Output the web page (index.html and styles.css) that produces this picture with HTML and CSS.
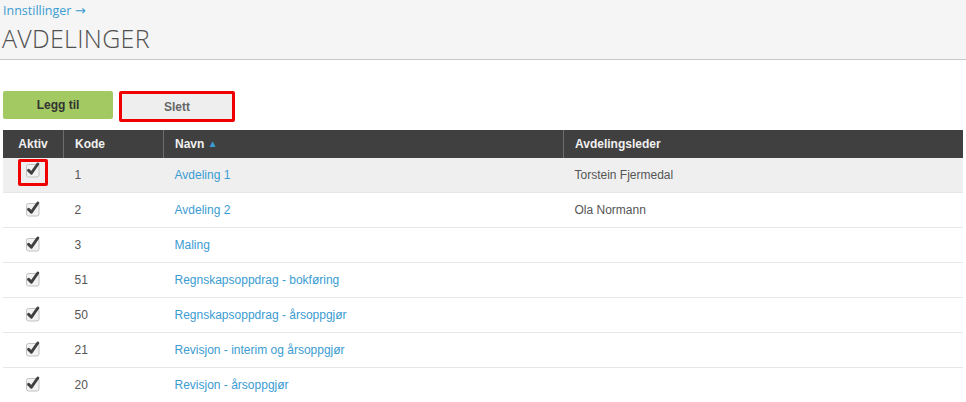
FILE: index.html
```html
<!DOCTYPE html>
<html lang='no'>
<head>
  <title>Avdelinger</title>
  <link rel="stylesheet" href="styles.css">
</head>
<body>
  <div class='pageHeader'>
    <a href='#' class='crumb'>Innstillinger <span class='crumbArrow'>&rarr;</span></a>
    <h1>AVDELINGER</h1>
  </div>

  <div class='content'>
    <div class='toolbar'>
      <button class='btnAdd'>Legg til</button>
      <div class='marked'>
        <button class='btnDelete'>Slett</button>
      </div>
    </div>

    <table class='grid'>
      <thead>
        <tr>
          <th class='colActive'>Aktiv</th>
          <th class='colCode'>Kode</th>
          <th class='colName'>Navn <span class='sortArrow'>&#9650;</span></th>
          <th>Avdelingsleder</th>
        </tr>
      </thead>
      <tbody id='rows'></tbody>
    </table>
  </div>

  <script>
    const departments = [
      { code: '1', name: 'Avdeling 1', leader: 'Torstein Fjermedal' },
      { code: '2', name: 'Avdeling 2', leader: 'Ola Normann' },
      { code: '3', name: 'Maling', leader: '' },
      { code: '51', name: 'Regnskapsoppdrag - bokføring', leader: '' },
      { code: '50', name: 'Regnskapsoppdrag - årsoppgjør', leader: '' },
      { code: '21', name: 'Revisjon - interim og årsoppgjør', leader: '' },
      { code: '20', name: 'Revisjon - årsoppgjør', leader: '' }
    ];

    const check = `<svg class='check' width='16' height='16' viewBox='0 0 16 16'>
      <rect x='1.5' y='2.5' width='12.5' height='12.5' rx='2' fill='#f2f2f2' stroke='#c2c2c2'/>
      <path d='M3.6 8.4 L6.4 11.2 L12.8 2' fill='none' stroke='#404040' stroke-width='2.9' stroke-linecap='round' stroke-linejoin='round'/>
    </svg>`;

    let tbody = document.querySelector('#rows');
    departments.forEach((dep, i) => {
      const tr = document.createElement('tr');
      if (i === 0) tr.className = 'selected';
      const box = i === 0 ? `<span class='marked markedBox'>${check}</span>` : check;
      tr.innerHTML = `
        <td class='colActive'>${box}</td>
        <td class='colCode'>${dep.code}</td>
        <td class='colName'><a href='#'>${dep.name}</a></td>
        <td>${dep.leader}</td>`;
      tbody.appendChild(tr);
    });
  </script>
</body>
</html>
```

FILE: styles.css
```css
body {
  margin: 0;
  background-color: white;
  font-family: 'Liberation Sans', Arial, sans-serif;
  font-size: 12px;
  color: #555;
}

a {
  color: #3a9cd2;
  text-decoration: none;
}

.pageHeader {
  background-color: #f5f5f5;
  border-bottom: 1px solid #c9c9c9;
  height: 59px;
  padding: 0 3px;
}

.crumb {
  display: block;
  padding-top: 2px;
  font-family: 'Open Sans', 'Liberation Sans', sans-serif;
  font-size: 12.5px;
  line-height: 17px;
}

.crumbArrow {
  font-family: 'DejaVu Sans', sans-serif;
  font-size: 13px;
}

.pageHeader h1 {
  margin: 4px 0 0 -1px;
  font-family: 'Open Sans', 'Liberation Sans', sans-serif;
  font-weight: 300;
  font-size: 25px;
  line-height: 30px;
  letter-spacing: 0.3px;
  color: #505050;
}

.content {
  padding: 31px 3px 0 3px;
}

.toolbar {
  display: flex;
  align-items: flex-start;
  gap: 6px;
  margin-bottom: 8px;
}

button {
  border: none;
  border-radius: 2px;
  font-family: 'Liberation Sans', Arial, sans-serif;
  font-size: 12px;
  font-weight: bold;
  padding: 0;
}

.btnAdd {
  width: 110px;
  height: 28px;
  background-color: #a3c963;
  color: #333;
}

.marked {
  border: 3px solid #f00000;
  border-radius: 2px;
}

.btnDelete {
  display: block;
  width: 110px;
  height: 25px;
  background-color: #eeeeee;
  color: #666;
  border-radius: 0;
}

.grid {
  width: 960px;
  border-collapse: collapse;
}

.grid th {
  background-color: #404040;
  color: #f0f0f0;
  font-weight: bold;
  text-align: left;
  height: 28px;
  padding: 0 11px;
  border-left: 1px solid #6d6d6d;
}

.grid th:first-child {
  border-left: none;
}

.grid td {
  height: 34px;
  padding: 0 11px;
  border-bottom: 1px solid #e6e6e6;
  color: #555;
}

.grid .colActive {
  width: 38px;
  text-align: center;
}

.grid .colCode {
  width: 77px;
}

.grid .colName {
  width: 377px;
}

.grid tr.selected td {
  background-color: #efefef;
}

.sortArrow {
  color: #3a9cd2;
  font-size: 10px;
  vertical-align: 1px;
}

.check {
  display: inline-block;
  vertical-align: middle;
  margin-top: -4px;
}

.markedBox {
  display: inline-block;
  width: 24px;
  height: 21px;
  line-height: 21px;
  vertical-align: middle;
  margin-top: -6px;
}
```
